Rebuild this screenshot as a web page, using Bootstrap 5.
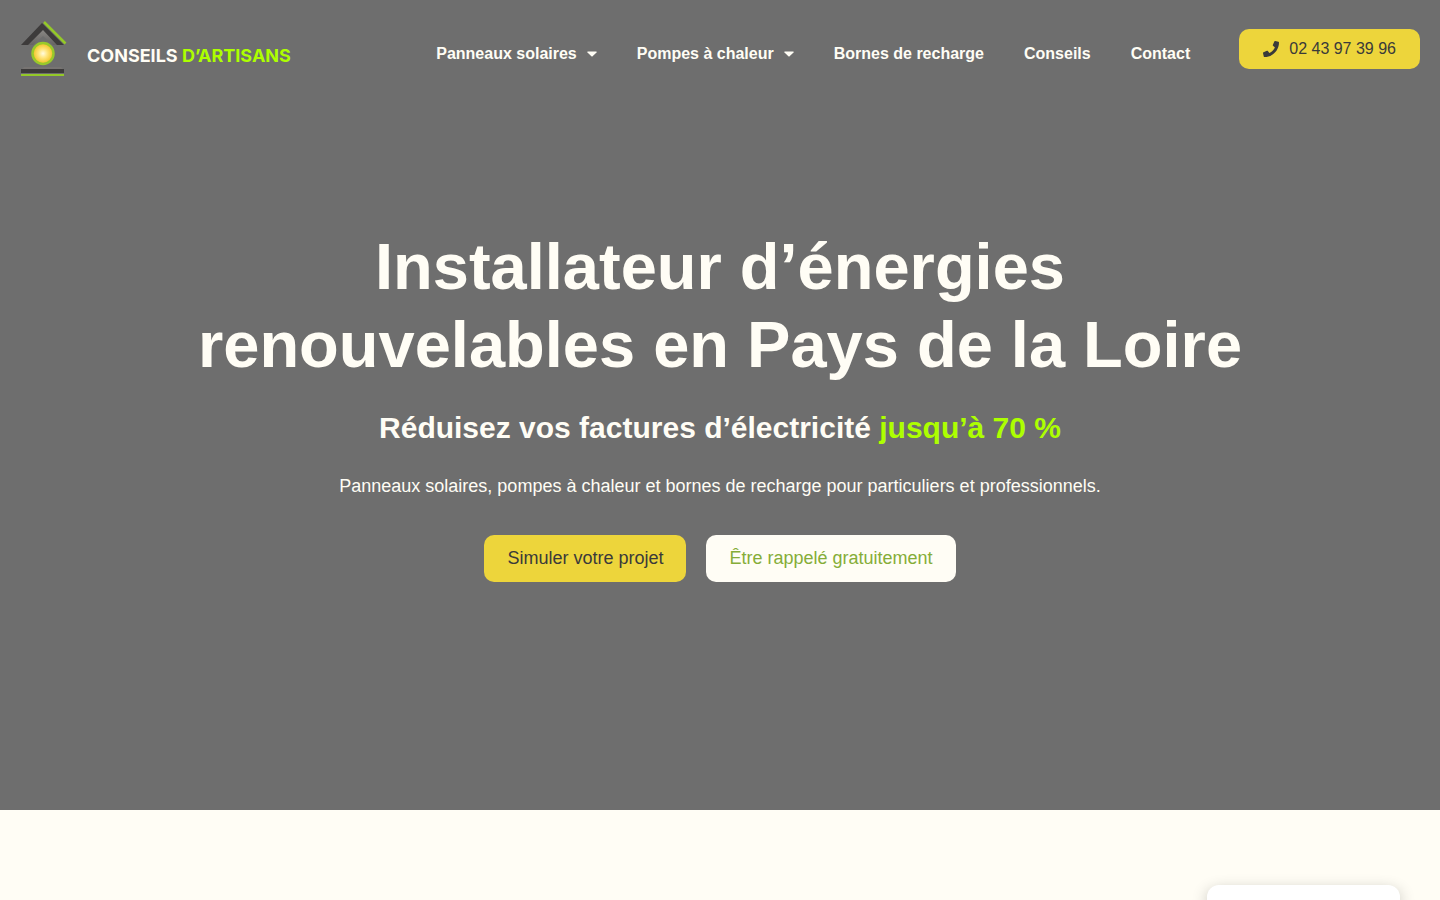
<!DOCTYPE html>
<html lang="fr">
<head>
<meta charset="utf-8">
<meta name="viewport" content="width=device-width, initial-scale=1">
<title>Conseils d’Artisans</title>
<link href="https://cdn.jsdelivr.net/npm/bootstrap@5.3.0/dist/css/bootstrap.min.css" rel="stylesheet">
<style>
  body { font-family: "Liberation Sans", Arial, sans-serif; background: #fffdf5; color: #fffdf5; overflow-x: hidden; }
  .hero { min-height: 90vh; background: #6e6e6e; }
  .site-nav { padding: 20px; }
  .brand-text { font: 700 18px/24px "Inter", "Liberation Sans", sans-serif; color: #fffdf5; margin: 14px 0 0 20px; }
  .accent { color: #adff00; }
  .site-links { gap: 40px; margin: 10px 49px 0 0; }
  .site-links .nav-link { color: #fffdf5; font-weight: 700; font-size: 16px; line-height: 24px; padding: 0; white-space: nowrap; }
  .caret { margin-left: 10px; }
  .btn-sun, .btn-cream { border: 0; border-radius: 10px; }
  .btn-sun, .btn-sun:hover { background: #edd53b; color: #3a3a3a; }
  .btn-cream, .btn-cream:hover { background: #fffdf5; color: #85ad38; }
  .btn-phone { font-size: 16px; line-height: 16px; padding: 12px 24px; gap: 10px; }
  .btn-cta { font-size: 18px; line-height: 23px; padding: 12px 23px; }
  .hero-body { padding: 0 20px 98px; }
  .hero-title { font-size: 65px; line-height: 78px; font-weight: 700; max-width: 1140px; margin-bottom: 26px; }
  .hero-sub { font-size: 30px; line-height: 36px; font-weight: 700; margin-bottom: 27px; }
  .hero-text { font-size: 18px; line-height: 27px; margin-bottom: 35px; }
  .cta-row { gap: 20px; }
  .corner-panel { width: 193px; height: 15px; right: 40px; bottom: 0; background: #fff; border-radius: 12px 12px 0 0; box-shadow: 0 6px 16px rgba(0,0,0,.3); }
</style>
</head>
<body>
<div class="hero d-flex flex-column">
  <header class="navbar navbar-expand-lg site-nav align-items-center">
    <a class="d-flex align-items-center text-decoration-none" href="#" aria-label="Conseils d’Artisans">
      <svg width="47" height="58" viewBox="0 0 47 58" aria-hidden="true">
        <defs>
          <radialGradient id="sun"><stop offset="0" stop-color="#fffbe0"/><stop offset=".4" stop-color="#ffe680"/><stop offset="1" stop-color="#f0bf1c"/></radialGradient>
          <linearGradient id="eave" x1="0" x2="0" y1="0" y2="1"><stop offset="0" stop-color="#8c8986"/><stop offset="1" stop-color="#666463"/></linearGradient>
        </defs>
        <path d="M7 25 23 9l16 16h-6L23 16 13 25z" fill="url(#eave)"/>
        <path d="M1 25 22 3l22 22h-7L23 10 8 25z" fill="#3d3b3b"/>
        <path d="M24 2 45.500 23.500" stroke="#94c928" stroke-width="2.500" fill="none"/>
        <circle cx="23" cy="33.500" r="10.500" fill="url(#sun)" stroke="#98c92b" stroke-width="2.500"/>
        <path d="M4 47h37l3 3H1z" fill="#777472"/>
        <path d="M1 49h43v4H1z" fill="#3d3b3b"/>
        <path d="M1 54h43v2H1z" fill="#94c928"/>
      </svg>
      <span class="brand-text">CONSEILS <span class="accent">D’ARTISANS</span></span>
    </a>
    <nav class="ms-auto" aria-label="Menu principal">
      <ul class="nav site-links">
        <li><a class="nav-link d-flex align-items-center" href="#">Panneaux solaires<svg class="caret" width="10" height="6" viewBox="0 0 10 6" aria-hidden="true"><path d="M.8.500h8.400q.8.100.3.900L5.600 5.300q-.6.500-1.200 0L.5 1.400Q0 .6.8.500z" fill="currentColor"/></svg></a></li>
        <li><a class="nav-link d-flex align-items-center" href="#">Pompes à chaleur<svg class="caret" width="10" height="6" viewBox="0 0 10 6" aria-hidden="true"><path d="M.8.500h8.400q.8.100.3.900L5.600 5.300q-.6.500-1.200 0L.5 1.400Q0 .6.8.500z" fill="currentColor"/></svg></a></li>
        <li><a class="nav-link" href="#">Bornes de recharge</a></li>
        <li><a class="nav-link" href="#">Conseils</a></li>
        <li><a class="nav-link" href="#">Contact</a></li>
      </ul>
    </nav>
    <a class="btn btn-sun btn-phone d-flex align-items-center" href="tel:0243973996"><svg width="16" height="16" viewBox="0 0 512 512" aria-hidden="true"><path fill="currentColor" d="M493.400 24.600l-104-24c-11.300-2.600-22.900 3.300-27.500 13.900l-48 112c-4.200 9.800-1.400 21.300 6.900 28l60.600 49.600c-36 76.700-98.900 140.500-177.200 177.200l-49.600-60.600c-6.800-8.300-18.200-11.100-28-6.900l-112 48C3.900 366.500-2 378.100.6 389.400l24 104C27.100 504.200 36.700 512 48 512c256.100 0 464-207.500 464-464 0-11.200-7.700-20.900-18.600-23.400z"/></svg>02 43 97 39 96</a>
  </header>
  <main class="hero-body flex-grow-1 d-flex flex-column align-items-center justify-content-center text-center">
    <h1 class="hero-title">Installateur d’énergies renouvelables en Pays de la Loire</h1>
    <h2 class="hero-sub">Réduisez vos factures d’électricité <span class="accent">jusqu’à 70 %</span></h2>
    <p class="hero-text">Panneaux solaires, pompes à chaleur et bornes de recharge pour particuliers et professionnels.</p>
    <div class="cta-row d-flex flex-wrap justify-content-center">
      <button type="button" class="btn btn-sun btn-cta">Simuler votre projet</button>
      <button type="button" class="btn btn-cream btn-cta">Être rappelé gratuitement</button>
    </div>
  </main>
</div>
<div class="corner-panel position-fixed"></div>
<script src="https://cdn.jsdelivr.net/npm/bootstrap@5.3.0/dist/js/bootstrap.bundle.min.js"></script>
</body>
</html>
